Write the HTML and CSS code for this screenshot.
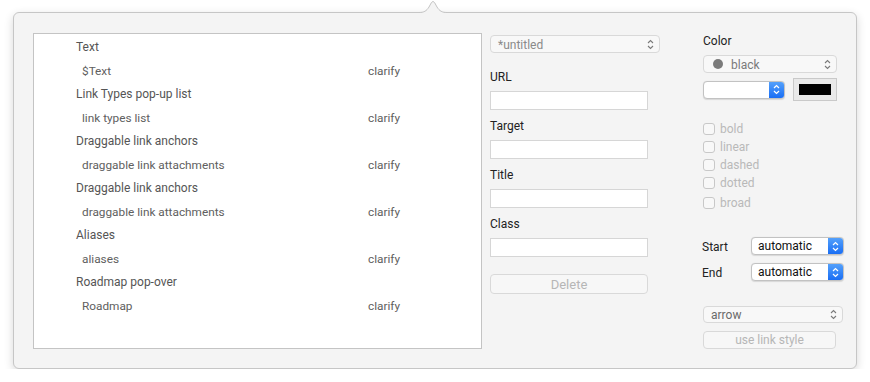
FILE: index.html
```html
<!DOCTYPE html>
<html>
<head>
<meta charset="utf-8">
<link rel="stylesheet" href="styles.css">
</head>
<body>
<div class="stage">
  <div class="panel">
    <svg class="beak" width="28" height="15" viewBox="0 0 28 15">
      <path d="M0 12.5 C5 12.5 7.5 11 10 7 L12.4 2.6 Q14 0.2 15.6 2.6 L18 7 C20.5 11 23 12.5 28 12.5 L28 15 L0 15 Z" fill="#f4f4f4"/>
      <path d="M0 12.5 C5 12.5 7.5 11 10 7 L12.4 2.6 Q14 0.2 15.6 2.6 L18 7 C20.5 11 23 12.5 28 12.5" fill="none" stroke="#c4c4c4" stroke-width="1"/>
    </svg>

    <div class="list">
      <div class="list-head">Text</div>
      <div class="list-sub"><span>$Text</span><span>clarify</span></div>
      <div class="list-head">Link Types pop-up list</div>
      <div class="list-sub"><span>link types list</span><span>clarify</span></div>
      <div class="list-head">Draggable link anchors</div>
      <div class="list-sub"><span>draggable link attachments</span><span>clarify</span></div>
      <div class="list-head">Draggable link anchors</div>
      <div class="list-sub"><span>draggable link attachments</span><span>clarify</span></div>
      <div class="list-head">Aliases</div>
      <div class="list-sub"><span>aliases</span><span>clarify</span></div>
      <div class="list-head">Roadmap pop-over</div>
      <div class="list-sub"><span>Roadmap</span><span>clarify</span></div>
    </div>

    <div class="mid">
      <div class="popup popup-wide">
        <span class="popup-text">*untitled</span>
        <svg class="chev" width="7" height="11" viewBox="0 0 7 11"><path d="M1 4 L3.5 1.5 L6 4 M1 7 L3.5 9.5 L6 7" fill="none" stroke="#7a7a7a" stroke-width="1.1"/></svg>
      </div>
      <div class="label first">URL</div>
      <div class="field"></div>
      <div class="label">Target</div>
      <div class="field"></div>
      <div class="label">Title</div>
      <div class="field"></div>
      <div class="label">Class</div>
      <div class="field"></div>
      <div class="btn btn-delete">Delete</div>
    </div>

    <div class="right">
      <div class="label-color">Color</div>
      <div class="popup popup-color">
        <span class="dot"></span>
        <span class="popup-text">black</span>
        <svg class="chev" width="7" height="11" viewBox="0 0 7 11"><path d="M1 4 L3.5 1.5 L6 4 M1 7 L3.5 9.5 L6 7" fill="none" stroke="#7a7a7a" stroke-width="1.1"/></svg>
      </div>
      <div class="color-row">
        <div class="bpop bpop-short">
          <span class="bpop-text"></span>
          <span class="bpop-btn"><svg width="7" height="11" viewBox="0 0 7 11"><path d="M1 4 L3.5 1.5 L6 4 M1 7 L3.5 9.5 L6 7" fill="none" stroke="#fff" stroke-width="1.2"/></svg></span>
        </div>
        <div class="well"><div class="well-fill"></div></div>
      </div>
      <div class="checks">
        <div class="check"><span class="box"></span>bold</div>
        <div class="check"><span class="box"></span>linear</div>
        <div class="check"><span class="box"></span>dashed</div>
        <div class="check"><span class="box"></span>dotted</div>
        <div class="check check-last"><span class="box"></span>broad</div>
      </div>
      <div class="se-row se-first">
        <span class="se-label">Start</span>
        <div class="bpop bpop-se">
          <span class="bpop-text">automatic</span>
          <span class="bpop-btn"><svg width="7" height="11" viewBox="0 0 7 11"><path d="M1 4 L3.5 1.5 L6 4 M1 7 L3.5 9.5 L6 7" fill="none" stroke="#fff" stroke-width="1.2"/></svg></span>
        </div>
      </div>
      <div class="se-row">
        <span class="se-label">End</span>
        <div class="bpop bpop-se">
          <span class="bpop-text">automatic</span>
          <span class="bpop-btn"><svg width="7" height="11" viewBox="0 0 7 11"><path d="M1 4 L3.5 1.5 L6 4 M1 7 L3.5 9.5 L6 7" fill="none" stroke="#fff" stroke-width="1.2"/></svg></span>
        </div>
      </div>
      <div class="popup popup-arrow">
        <span class="popup-text">arrow</span>
        <svg class="chev" width="7" height="11" viewBox="0 0 7 11"><path d="M1 4 L3.5 1.5 L6 4 M1 7 L3.5 9.5 L6 7" fill="none" stroke="#7a7a7a" stroke-width="1.1"/></svg>
      </div>
      <div class="btn btn-style">use link style</div>
    </div>
  </div>
</div>
</body>
</html>
```
FILE: styles.css
```css
body {
  margin: 0;
  background: #ffffff;
  font-family: Roboto, "Liberation Sans", sans-serif;
}

.stage {
  padding: 12px 0 0 13px;
}

.panel {
  position: relative;
  width: 844px;
  height: 357px;
  box-sizing: border-box;
  border: 1px solid #c6c6c6;
  border-radius: 6px;
  background: #f4f4f4;
  box-shadow: 0 3px 10px rgba(0, 0, 0, 0.16);
  display: flex;
  align-items: flex-start;
  padding: 20px 0 0 19px;
}

.beak {
  position: absolute;
  left: 405px;
  top: -13px;
  display: block;
}

/* list */
.list {
  width: 449px;
  height: 316px;
  box-sizing: border-box;
  border: 1px solid #c4c4c4;
  background: #ffffff;
  padding-top: 2px;
}

.list-head {
  height: 23px;
  line-height: 23px;
  padding-left: 42px;
  font-size: 12px;
  color: #555555;
}

.list-sub {
  height: 24px;
  line-height: 24px;
  padding-left: 48px;
  font-size: 11.8px;
  color: #606060;
  display: grid;
  grid-template-columns: 286px auto;
}

/* middle column */
.mid {
  margin-left: 8px;
  width: 170px;
  padding-top: 2px;
  display: flex;
  flex-direction: column;
}

.popup {
  height: 18px;
  box-sizing: border-box;
  border: 1px solid #d9d9d9;
  border-radius: 4px;
  background: #f8f8f8;
  display: flex;
  align-items: center;
  padding: 1px 5px 0 7px;
  font-size: 12px;
  color: #8a8a8a;
}

.popup-text {
  flex: 1;
}

.chev {
  display: block;
  margin-top: -1px;
}

.popup-wide {
  width: 170px;
}

.label {
  font-size: 12px;
  line-height: 16px;
  color: #222222;
  margin-top: 8px;
}

.label.first {
  margin-top: 16px;
}

.field {
  width: 158px;
  height: 19px;
  box-sizing: border-box;
  border: 1px solid #d6d6d6;
  background: #ffffff;
  margin-top: 6px;
}

.btn {
  box-sizing: border-box;
  border: 1px solid #d9d9d9;
  border-radius: 4px;
  background: #f7f7f7;
  text-align: center;
  color: #b6b6b6;
}

.btn-delete {
  width: 158px;
  height: 20px;
  line-height: 19px;
  margin-top: 17px;
  font-size: 13px;
}

/* right column */
.right {
  margin-left: 43px;
  width: 141px;
  display: flex;
  flex-direction: column;
}

.label-color {
  font-size: 12px;
  line-height: 14px;
  padding-top: 1px;
  color: #222222;
}

.popup-color {
  width: 134px;
  margin-top: 7px;
  padding-left: 9px;
  color: #7a7a7a;
}

.dot {
  width: 10px;
  height: 10px;
  border-radius: 50%;
  background: #7b7b7b;
  margin-right: 8px;
  margin-top: -1px;
}

.color-row {
  display: flex;
  align-items: center;
  margin-top: 5px;
  height: 23px;
}

.bpop {
  height: 18px;
  box-sizing: border-box;
  border: 1px solid #c2c2c2;
  border-radius: 4px;
  background: #ffffff;
  box-shadow: 0 0.5px 1px rgba(0, 0, 0, 0.12);
  display: flex;
  overflow: hidden;
}

.bpop-short {
  width: 82px;
}

.bpop-text {
  flex: 1;
  font-size: 12px;
  line-height: 17px;
  padding-left: 6px;
  color: #111111;
}

.bpop-btn {
  width: 15px;
  background: linear-gradient(#53a0fb, #1a6ef4);
  display: flex;
  align-items: center;
  justify-content: center;
}

.well {
  width: 44px;
  height: 23px;
  box-sizing: border-box;
  border: 1px solid #c9c9c9;
  background: #e9e9e9;
  padding: 5px;
  margin-left: 8px;
}

.well-fill {
  width: 100%;
  height: 100%;
  background: #000000;
}

.checks {
  margin-top: 19px;
  display: flex;
  flex-direction: column;
}

.check {
  height: 18px;
  display: flex;
  align-items: center;
  font-size: 12px;
  color: #b9b9b9;
}

.check-last {
  margin-top: 2px;
}

.box {
  width: 12px;
  height: 12px;
  box-sizing: border-box;
  border: 1px solid #c8c8c8;
  border-radius: 3px;
  background: #f8f8f8;
  margin-right: 5px;
}

.se-row {
  display: flex;
  align-items: center;
  margin-top: 8px;
  height: 18px;
}

.se-first {
  margin-top: 25px;
}

.se-label {
  width: 48px;
  font-size: 12px;
  color: #222222;
  margin-left: -1px;
  padding-top: 1px;
}

.bpop-se {
  width: 93px;
  margin-left: 1px;
}

.popup-arrow {
  width: 140px;
  height: 17px;
  margin-top: 25px;
  color: #6a6a6a;
}

.btn-style {
  width: 133px;
  height: 18px;
  line-height: 17px;
  margin-top: 8px;
  font-size: 12px;
}
```
